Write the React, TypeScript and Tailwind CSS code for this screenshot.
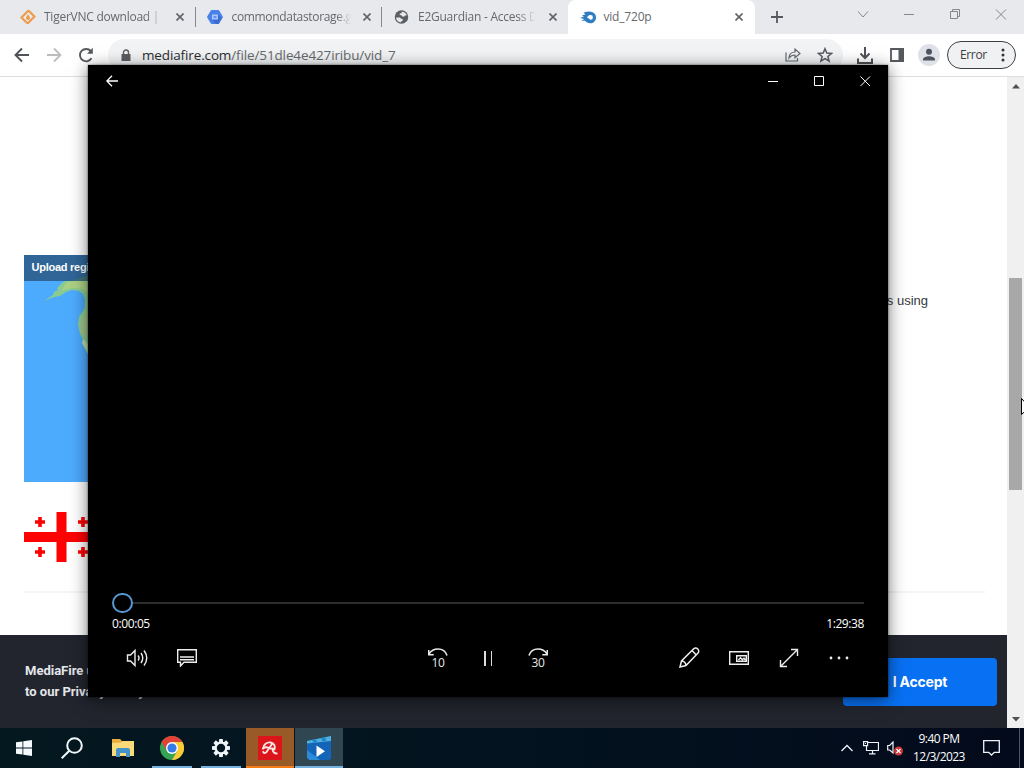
import type { ReactNode } from "react";
import clsx from "clsx";

const UI_FONT = "font-['Open_Sans','Noto_Sans',sans-serif]";
const PAGE_FONT = "font-['Liberation_Sans',Arial,sans-serif]";

interface TabProps {
  icon: ReactNode;
  title: string;
  titleClass: string;
  active?: boolean;
  divider?: boolean;
}

function CloseGlyph() {
  return (
    <svg width="8" height="8" viewBox="0 0 8 8" stroke="#5f6368" strokeWidth="1.6">
      <path d="M.5.5l7 7M7.5.5l-7 7" />
    </svg>
  );
}

function Tab({ icon, title, titleClass, active, divider }: TabProps) {
  return (
    <div
      className={clsx(
        "relative flex h-[34px] w-[186.5px] shrink-0 items-center pl-3",
        active && "rounded-t-lg bg-white",
      )}
    >
      <span className="flex h-4 w-4 shrink-0 items-center justify-center">{icon}</span>
      <span
        className={clsx(
          "ml-2 w-[120px] whitespace-nowrap text-[12px] leading-[18px] text-[#66696d]",
          titleClass,
        )}
      >
        {title}
      </span>
      <span className={active ? "ml-[11px]" : "ml-3"}>
        <CloseGlyph />
      </span>
      {divider && <span className="absolute right-[-1px] top-[7px] h-5 w-px bg-[#85888c]" />}
    </div>
  );
}

function TabStrip() {
  return (
    <div className="flex h-[34px] shrink-0 bg-[#e7e9ec] pl-2">
      <Tab
        divider
        title="TigerVNC download |"
        titleClass="tracking-[-0.25px] [mask-image:linear-gradient(90deg,#000_85%,transparent)]"
        icon={
          <svg width="16" height="16" viewBox="0 0 16 16" fill="none" stroke="#ee9b4c" strokeWidth="2.2">
            <path d="M7 14L1.5 8.5 8 2l2 .5M9 2l5.5 5.5L8 14l-2-.5" />
            <path d="M8 4.8c.3 2 2 2.3 2 4.1a2 2 0 0 1-4 0c0-1.5 1.6-1.8 2-4.1z" fill="#ee9b4c" stroke="none" />
          </svg>
        }
      />
      <Tab
        divider
        title="commondatastorage.g"
        titleClass="tracking-[-0.33px] pl-px [mask-image:linear-gradient(90deg,#000_88%,transparent)]"
        icon={
          <svg width="16" height="16" viewBox="0 0 16 16">
            <path d="M4.6 1h6.8l.8.5L15.8 7.5v1L12.2 14.500l-.8.5H4.600l-.8-.5L.2 8.500v-1L3.800 1.500z" fill="#4a80ea" />
            <path d="M11 5.500l3.500 3.500-2.900 5.500-.6.500H9L5 11z" fill="#3c6ad0" />
            <path d="M5 5.500h6v5H5z" fill="#a9c6fb" />
            <path d="M6.500 7h3v2h-3z" fill="#5e91f5" />
          </svg>
        }
      />
      <Tab
        title="E2Guardian - Access D"
        titleClass="tracking-[-0.25px] pl-px [mask-image:linear-gradient(90deg,#000_84%,transparent_99%)]"
        icon={
          <svg className="ml-px" width="16" height="16" viewBox="0 0 16 16">
            <circle cx="8" cy="8" r="7.2" fill="#5b5f63" />
            <path d="M8.3 2.3c2.7 0 4.500 1.500 5.300 3.700l-1.800.3-1.200 1.300-2.200-.3-.8-1.400-1.700-.1.400-1.500 1.700-.4z" fill="#e7e9ec" />
            <path d="M2.200 8.400l4 .2 1.600 1.300 1.500.1v1.900l-1.200.4-.5 1.400C4.700 13.500 2.300 11.600 2.200 8.400z" fill="#e7e9ec" />
          </svg>
        }
      />
      <div className="w-[187px] shrink-0 rounded-t-lg bg-white">
        <Tab
          active
          title="vid_720p"
          titleClass="tracking-[-0.2px]"
          icon={
            <svg width="16" height="13" viewBox="0 0 16 13">
              <path d="M3.500 1.800C7 .2 10.200 0 12.700 1.300 15 2.500 16 4.300 16 6.400c0 3.500-2.700 5.800-5.700 5.800-2.500 0-4-.9-5.300-2.400L1.300 9.700 4.200 8 0 6.900l3.800-1.400L2 4.300l3.500-.8z" fill="#2f7fc0" />
              <path d="M7 6.600c1.200-1.900 2.300-2.500 3.600-2.500a2.300 2.300 0 0 1 0 4.600C9.200 8.700 9 7.200 7 6.600z" fill="#fff" />
            </svg>
          }
        />
      </div>
      <div className="flex flex-1 items-center pl-[16.5px]">
        <svg width="12" height="12" viewBox="0 0 12 12" stroke="#55585c" strokeWidth="1.8">
          <path d="M6 0v12M0 6h12" />
        </svg>
      </div>
      <svg className="mt-2 h-3 w-[184px] shrink-0" viewBox="0 0 184 12" fill="none" stroke="#85878a">
        <path d="M18 3.500l5 5.500 5-5.500M64 6.500h10M110.500 3.500h7v7h-7zM112.500 3.500v-2h7v7h-2M156 1.500l10 10M166 1.500l-10 10" />
      </svg>
    </div>
  );
}

function Toolbar() {
  return (
    <div className="flex h-[43px] shrink-0 items-center border-b border-[#dcdedf] bg-white pl-[14px] pr-2">
      <svg className="shrink-0" width="16" height="16" viewBox="0 0 16 16" fill="none" stroke="#505357" strokeWidth="1.9">
        <path d="M15 8H2M8 1.500L1.500 8 8 14.500" />
      </svg>
      <svg className="ml-4 shrink-0" width="16" height="16" viewBox="0 0 16 16" fill="none" stroke="#bbbdbf" strokeWidth="1.8">
        <path d="M1 8h13M8 1.500L14.500 8 8 14.500" />
      </svg>
      <svg className="ml-4 shrink-0" width="16" height="16" viewBox="0 0 16 16" fill="none" stroke="#55585c" strokeWidth="1.9">
        <path d="M13.500 11.300A6.200 6.200 0 1 1 12.800 4" />
        <path d="M14.800.8v6H9z" fill="#55585c" stroke="none" />
      </svg>
      <div className="ml-[14px] flex h-8 w-[735px] shrink-0 items-center rounded-full bg-[#f1f3f4] pl-[13px] pr-[10px]">
        <svg width="10" height="13" viewBox="0 0 10 13">
          <path d="M.5 5h9v7h-9z" fill="#5a5d61" />
          <path d="M2.500 6V3.500a2.500 2.500 0 0 1 5 0V6" fill="none" stroke="#5a5d61" strokeWidth="1.4" />
        </svg>
        <span className="ml-[11px] flex-1 whitespace-nowrap text-[13.5px] leading-[18px] tracking-[-0.13px] text-[#66696d]">
          <span className="text-[#2b2d30]">mediafire.com</span>/file/51dle4e427iribu/vid_7
        </span>
        <svg width="16" height="16" viewBox="0 0 16 16" fill="none" stroke="#65686c" strokeWidth="1.2">
          <path d="M1 5.500V14h11.500v-3M4 11c.2-4 2.500-6 6-6V2l5 4.500-5 4.300V8C7.500 8 5.500 9 4 11z" />
        </svg>
        <svg className="ml-4" width="16" height="16" viewBox="0 0 16 16" fill="none" stroke="#585b5f" strokeWidth="1.5">
          <path d="M8 1.700l1.800 4.400 4.700.3-3.600 3 1.200 4.700L8 11.600l-4.100 2.500 1.200-4.700-3.600-3 4.700-.3z" />
        </svg>
      </div>
      <svg className="ml-[14px] shrink-0" width="16" height="17" viewBox="0 0 16 17" fill="none" stroke="#4f5256" strokeWidth="2">
        <path d="M8 0v10M3.500 6.500L8 11l4.500-4.500M1 11.500V16h14v-4.500" />
      </svg>
      <svg className="ml-[17px] shrink-0" width="14" height="14" viewBox="0 0 14 14">
        <path d="M1 1h12v12H1z" fill="none" stroke="#55585c" strokeWidth="1.8" />
        <path d="M8.500 0H14v14H8.500z" fill="#55585c" />
      </svg>
      <svg className="ml-[14px] shrink-0" width="22" height="22" viewBox="0 0 22 22">
        <circle cx="11" cy="11" r="11" fill="#dee1e7" />
        <circle cx="11" cy="7.8" r="3" fill="#4d535c" />
        <path d="M5 16.500v-1.300c0-2 3.500-3 6-3s6 1 6 3v1.300z" fill="#4d535c" />
      </svg>
      <div className="ml-[7px] flex h-7 w-[69px] shrink-0 items-center rounded-full border border-[#3c3e41] bg-[#f0f1f3] pl-[12px]">
        <span className="text-[12px] tracking-[-0.35px] text-[#3a3d40]">Error</span>
        <svg className="ml-[14px]" width="4" height="14" viewBox="0 0 4 14" fill="#303235">
          <circle cx="2" cy="2" r="1.5" />
          <circle cx="2" cy="7" r="1.5" />
          <circle cx="2" cy="12" r="1.5" />
        </svg>
      </div>
    </div>
  );
}

function UploadRegionMap() {
  return (
    <div className="h-[227px] w-[200px] bg-[#4dabfd]">
      <div className="relative h-full">
        <div className={`h-[26px] bg-[#2f6597] pl-[7.5px] text-[11px] font-bold leading-[25px] tracking-[-0.25px] text-white ${PAGE_FONT}`}>
          Upload region
        </div>
        <svg className="absolute left-0 top-0" width="100" height="110" viewBox="0 0 100 110">
          <path d="M56 23l8-3v6H50z" fill="#3f7177" />
          <path d="M38 28l3-2h59v74H66l-4-6-2-8-3-5-2-6-1-6 1-7 4-6 2-4v-8l-2-5-4-3-7-1-6 2-6 4-6 1-10 4 9-6 1-3 4-2-1-2z" fill="#8acb91" />
          <path d="M40 31l3-4 6-1h15v12l-5-4-10-1-6 1-5 2z" fill="#abd184" />
          <path d="M62 57l-4 7-2 8 2 8h6V57z" fill="#9fc48a" />
          <path d="M58 88l1-4 5 5v10z" fill="#bcdcab" />
        </svg>
      </div>
    </div>
  );
}

const FLAG_CROSSES = [
  [16, 10],
  [59, 10],
  [16, 40],
  [59, 40],
];

function GeorgiaFlag() {
  return (
    <svg width="75" height="50" viewBox="0 0 75 50" fill="#fd0303">
      <path d="M32.500 0h10v20H75v10H42.500v20h-10V30H0V20h32.500z" />
      {FLAG_CROSSES.map(([x, y]) => (
        <path key={`${x}-${y}`} transform={`translate(${x} ${y})`} d="M-1.800-5h3.600v3.200H5v3.600H1.800V5h-3.600V1.800H-5v-3.600h3.200z" />
      ))}
    </svg>
  );
}

function WebPage() {
  return (
    <div className={`flex min-h-0 flex-1 ${PAGE_FONT}`}>
      <div className="flex min-w-0 flex-1 flex-col bg-white">
        <div className="flex h-[558px] shrink-0 flex-col px-6 pt-[178px]">
          <div className="flex justify-between">
            <UploadRegionMap />
            <p className="mr-[55px] mt-[36px] text-[13px] leading-[20px] text-[#343942]">is using</p>
          </div>
          <div className="mt-[30px]">
            <GeorgiaFlag />
          </div>
          <div className="mt-[29px] h-[2px] w-[961px] bg-[#f4f4f5]" />
        </div>
        <div className="flex flex-1 items-start justify-between bg-[#22252e] pl-[25px] pr-[10px]">
          <p className="pt-[25px] font-['Roboto',sans-serif] text-[13px] font-bold leading-[21px] text-[#e5e7eb]">
            MediaFire uses cookies
            <br />
            to our Privacy Policy
          </p>
          <button className="mt-[23px] h-[48px] w-[154px] rounded bg-[#0870f3] pb-[2px] text-center font-['Inter',sans-serif] text-[14px] font-bold tracking-[-0.2px] text-white">
            I Accept
          </button>
        </div>
      </div>
      <div className="flex w-[17px] shrink-0 flex-col items-center bg-[#f0f0f0]">
        <svg className="mt-[7px]" width="8" height="5" viewBox="0 0 8 5" fill="#505050">
          <path d="M4 0l4 4.500H0z" />
        </svg>
        <div className="mt-[189px] h-[212px] w-[13px] bg-[#a8a8a8]" />
        <svg className="mb-[6px] mt-auto" width="8" height="5" viewBox="0 0 8 5" fill="#505050">
          <path d="M0 0h8L4 4.500z" />
        </svg>
      </div>
    </div>
  );
}

function Skip({ seconds, forward }: { seconds: number; forward?: boolean }) {
  return (
    <div className="flex w-[50px] flex-col items-center text-[#e8e8e8]">
      <svg className={clsx("h-2 w-5", forward && "-scale-x-100")} viewBox="0 0 20 8" fill="none" stroke="currentColor" strokeWidth="1.6">
        <path d="M1 6C3 2.800 6 1 10 1s7.500 2 9 6.500M.7 2v4.800h5" />
      </svg>
      <span className="text-[12px] leading-[13px] tracking-[-0.3px]">{seconds}</span>
    </div>
  );
}

function VideoPlayer() {
  return (
    <div className="absolute left-[88px] top-[65px] flex h-[632px] w-[800px] flex-col bg-black text-white [box-shadow:0_3px_16px_rgba(0,0,0,0.55),0_0_2px_rgba(0,0,0,0.6)]">
      <div className="flex h-[31px] shrink-0 items-center justify-between pl-[18px] pr-[17px]">
        <svg width="12" height="12" viewBox="0 0 12 12" fill="none" stroke="currentColor" strokeWidth="1.3">
          <path d="M12 6H1M6 .8L.8 6 6 11.200" />
        </svg>
        <svg width="103" height="12" viewBox="0 0 103 12" fill="none" stroke="currentColor">
          <path d="M0 6.500h10M46.500 1.500h9v9h-9zM92.500 1.500l9.500 9.500M102 1.500L92.500 11" />
        </svg>
      </div>
      <div className="flex-1" />
      <div className="flex h-[118px] shrink-0 flex-col px-6">
        <div className="mt-[14px] flex h-5 items-center">
          <span className="h-5 w-[21px] shrink-0 rounded-full border-2 border-[#5798d6] bg-black" />
          <span className="h-[2px] flex-1 bg-[#2d2d2d]" />
        </div>
        <div className="mt-[3px] flex justify-between text-[12px] leading-[16px] tracking-[-0.4px]">
          <span>0:00:05</span>
          <span>1:29:38</span>
        </div>
        <div className="mt-[13px] flex h-[26px] items-center text-[#ededed]">
          <svg className="ml-[14px]" width="22" height="20" viewBox="0 0 22 20" fill="none" stroke="currentColor" strokeWidth="1.4">
            <path d="M1.500 7h3L9 2.500v15L4.500 13h-3zM12 7.500q2 2.500 0 5M15 5q3.500 5 0 10M18 2.500q5.500 7.500 0 15" />
          </svg>
          <svg className="ml-[29px]" width="20" height="18" viewBox="0 0 20 18" fill="none" stroke="currentColor" strokeWidth="1.4">
            <path d="M.7.7h18.600v12.600H7L3.500 17v-3.700H.7zM3 8h14M3 10.700h14" />
          </svg>
          <div className="ml-[216px]">
            <Skip seconds={10} />
          </div>
          <div className="flex w-[50px] justify-center gap-[5px]">
            <span className="h-[15px] w-[1.5px] bg-[#dedede]" />
            <span className="h-[15px] w-[1.5px] bg-[#dedede]" />
          </div>
          <Skip seconds={30} forward />
          <svg className="ml-[115px]" width="22" height="22" viewBox="0 0 22 22" fill="none" stroke="currentColor" strokeWidth="1.5">
            <path d="M2 20l1.500-6L15.500 2a3 3 0 0 1 4.300 4.300L8 18.500zM14 3.500L18.300 8M3.500 14c2.500.2 4.200 1.800 4.500 4.500" />
          </svg>
          <svg className="ml-[29px]" width="20" height="14" viewBox="0 0 20 14" fill="none" stroke="currentColor" strokeWidth="1.4">
            <path d="M.7.7h18.600v12.600H.7z" />
            <path d="M7.700 4.700h9.600v5.600H7.700zM9.500 9l2-2.300 1.800 2L15 7.200l1.500 1.800" />
          </svg>
          <svg className="ml-[30px]" width="20" height="20" viewBox="0 0 20 20" fill="none" stroke="currentColor" strokeWidth="1.4">
            <path d="M1.500 18.500l17-17M12 1.500h6.500V8M1.500 12v6.500H8" />
          </svg>
          <svg className="ml-[30px]" width="20" height="4" viewBox="0 0 20 4" fill="currentColor">
            <circle cx="2" cy="2" r="1.4" />
            <circle cx="10" cy="2" r="1.4" />
            <circle cx="18" cy="2" r="1.4" />
          </svg>
        </div>
      </div>
    </div>
  );
}

function TaskButton({ children, className, bar }: { children: ReactNode; className?: string; bar?: string }) {
  return (
    <div className={clsx("relative flex h-10 w-12 shrink-0 items-center justify-center", className)}>
      {children}
      {bar && <span className={clsx("absolute bottom-0 h-[2px]", bar)} />}
    </div>
  );
}

// Gear outline built from eight teeth rotated around the hub
const GEAR_TEETH = [0, 45, 90, 135, 180, 225, 270, 315];

function Taskbar() {
  return (
    <div className="flex h-10 shrink-0 bg-gradient-to-r from-[#041820] via-[#03131f] to-[#030a1b] text-white">
      <TaskButton>
        <svg width="16" height="16" viewBox="0 0 16 16" fill="#f6fafc">
          <path d="M0 2.300L6.500 1.400v6.100H0zM7.300 1.300L16 0v7.500H7.300zM0 8.400h6.500v6.200L0 13.700zM7.300 8.400H16V16l-8.700-1.200z" />
        </svg>
      </TaskButton>
      <TaskButton>
        <svg width="22" height="22" viewBox="0 0 22 22" fill="none" stroke="#f1f6f9" strokeWidth="2">
          <circle cx="13.5" cy="8.5" r="7.3" />
          <path d="M8.300 13.700L.7 21.300" />
        </svg>
      </TaskButton>
      <TaskButton className="ml-[3px]">
        <svg width="22" height="18" viewBox="0 0 22 18">
          <path d="M0 0h8l2 2h12v15H0z" fill="#e9ad3e" />
          <path d="M0 4l9-.5L11 2h11v15H0z" fill="#fbdb79" />
          <path d="M4 18v-7q0-2 2-2h10q2 0 2 2v7h-4v-4H8v4z" fill="#4294ca" />
        </svg>
      </TaskButton>
      <TaskButton bar="left-[5px] w-10 bg-[#76b2df]">
        <svg className="ml-[2px]" width="24" height="24" viewBox="0 0 24 24">
          <circle cx="12" cy="12" r="12" fill="#35a553" />
          <path d="M1.600 6A12 12 0 0 1 22.400 6H12L6.800 15z" fill="#e24336" />
          <path d="M12 6h10.400A12 12 0 0 1 12 24l5.200-9z" fill="#fbcb35" />
          <circle cx="12" cy="12" r="6" fill="#fff" />
          <circle cx="12" cy="12" r="4.6" fill="#347be8" />
        </svg>
      </TaskButton>
      <TaskButton bar="left-[6px] w-10 bg-[#76b2df]">
        <svg className="ml-1" width="20" height="20" viewBox="0 0 20 20">
          <g fill="#eef4f7">
            {GEAR_TEETH.map((deg) => (
              <path key={deg} transform={`rotate(${deg} 10 10)`} d="M8.200 1h3.600l.4 4H7.800z" />
            ))}
          </g>
          <circle cx="10" cy="10" r="5.3" fill="none" stroke="#eef4f7" strokeWidth="2.2" />
        </svg>
      </TaskButton>
      <TaskButton className="ml-[3px] bg-[#985a27]" bar="inset-x-0 bg-[#f47c17]">
        <svg width="24" height="24" viewBox="0 0 24 24">
          <path d="M0 0h24v24H0z" fill="#dc151b" />
          <g fill="none" stroke="#fbe9e8" strokeWidth="1.8" strokeLinecap="round" strokeLinejoin="round">
            <path d="M5 12.500C5.500 8.500 9 6 12.500 6.500c3.500.6 5.200 3.800 4 7-1-1-2.500-1.300-4-.8" />
            <path d="M5 12.500c1.800-1.500 4-1.500 6-.5" />
            <path d="M14 8l-5.500 8c-1 1.500-3 1.300-3.300-.2" />
            <path d="M14.500 13.500c.5 2.500 2 4 4.300 4" />
          </g>
        </svg>
      </TaskButton>
      <TaskButton className="ml-px bg-[#304651]" bar="inset-x-0 bg-[#76b2df]">
        <svg width="24" height="24" viewBox="0 0 24 24">
          <path d="M0 5L24 0v22.500L22.500 24h-20L0 22z" fill="#1465b8" />
          <path d="M0 5L24 0v5L0 7.500z" fill="#4fb0dd" />
          <path d="M5 4l4-.8 1.500 3-4 .5zM14 2.100l4-.8L19.500 5l-4 .5z" fill="#2287c7" />
          <path d="M0 14v8l2.500 2H13z" fill="#2b8bda" />
          <path d="M9.500 9.500v11.500l8.500-5.700z" fill="#fff" />
        </svg>
      </TaskButton>
      <div className="ml-auto flex items-center">
        <svg width="12" height="8" viewBox="0 0 12 8" fill="none" stroke="#eef3f8" strokeWidth="1.3">
          <path d="M.5 7L6 1.500 11.500 7" />
        </svg>
        <svg className="ml-[10px]" width="16" height="14" viewBox="0 0 16 14" fill="none" stroke="#eef3f8" strokeWidth="1.2">
          <path d="M5 1.500h10.500v8H3.500V5M.6.6h4v4h-4zM2 2.500h1M9.500 9.500v3M6 12.800h6.500" />
        </svg>
        <svg className="ml-[8px]" width="17" height="15" viewBox="0 0 17 15">
          <path d="M.7 4.500h2L6 1v11L2.700 9H.7z" fill="none" stroke="#eef3f8" strokeWidth="1.2" />
          <circle cx="11.500" cy="10" r="4.5" fill="#ca353a" />
          <path d="M9.500 8l4 4M13.500 8l-4 4" stroke="#fff" strokeWidth="1.2" />
        </svg>
        <div className="ml-[7px] w-[56px] whitespace-nowrap text-center text-[12px] leading-[18px] tracking-[-0.55px]">
          <div>9:40 PM</div>
          <div>12/3/2023</div>
        </div>
        <svg className="ml-4 mr-[19px]" width="17" height="16" viewBox="0 0 17 16" fill="none" stroke="#eef3f8" strokeWidth="1.3">
          <path d="M.7.7h15.600v11.600h-5L8.500 15l-2.800-2.700h-5z" />
        </svg>
        <span className="mr-[4px] h-full w-px bg-[#4c5563]" />
      </div>
    </div>
  );
}

export default function App() {
  return (
    <div className={`relative flex h-[768px] w-[1024px] flex-col overflow-hidden bg-white ${UI_FONT}`}>
      <TabStrip />
      <Toolbar />
      <WebPage />
      <Taskbar />
      <VideoPlayer />
      <svg className="absolute left-[1021px] top-[398px]" width="12" height="19" viewBox="0 0 12 19" fill="#fff" stroke="#000">
        <path d="M.5.5v16l3.700-3.500 2.500 5.500 2-1-2.400-5.300h5z" />
      </svg>
    </div>
  );
}
